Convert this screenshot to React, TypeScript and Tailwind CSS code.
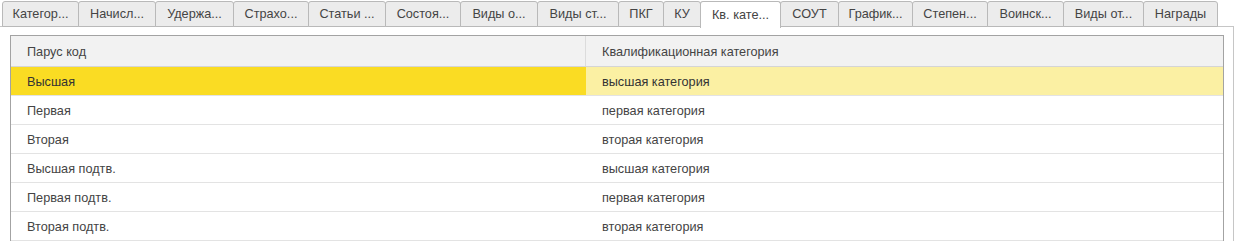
import React from 'react';

// width = distance between tab borders + 1 (neighbouring tabs share a border)
const tabs: { label: string; width: number; active?: boolean }[] = [
  { label: 'Категор...', width: 77 },
  { label: 'Начисл...', width: 78 },
  { label: 'Удержа...', width: 79 },
  { label: 'Страхо...', width: 76 },
  { label: 'Статьи ...', width: 78 },
  { label: 'Состоя...', width: 76 },
  { label: 'Виды о...', width: 78 },
  { label: 'Виды ст...', width: 82 },
  { label: 'ПКГ', width: 46 },
  { label: 'КУ', width: 38 },
  { label: 'Кв. кате...', width: 81, active: true },
  { label: 'СОУТ', width: 59 },
  { label: 'График...', width: 75 },
  { label: 'Степен...', width: 76 },
  { label: 'Воинск...', width: 77 },
  { label: 'Виды от...', width: 81 },
  { label: 'Награды', width: 75 },
];

const rows = [
  { code: 'Высшая', category: 'высшая категория' },
  { code: 'Первая', category: 'первая категория' },
  { code: 'Вторая', category: 'вторая категория' },
  { code: 'Высшая подтв.', category: 'высшая категория' },
  { code: 'Первая подтв.', category: 'первая категория' },
  { code: 'Вторая подтв.', category: 'вторая категория' },
];

export default function App() {
  return (
    <div
      className="w-[1236px] h-[242px] bg-white overflow-hidden text-[12.7px] text-[#444]"
      style={{ fontFamily: '"Liberation Sans", Arial, sans-serif' }}
    >
      {/* tab strip */}
      <div className="flex h-[27px] pl-[2px] pt-[1px]">
        {tabs.map((tab) => (
          <div
            key={tab.label}
            style={{ width: tab.width }}
            className={`-mr-px flex items-center justify-center pt-[2px] rounded-t-[3px] border border-[#b9b9b9] ${
              tab.active ? 'relative z-10 h-[27px] border-b-0 bg-white' : 'h-[26px] bg-[#ececec]'
            }`}
          >
            {tab.label}
          </div>
        ))}
      </div>

      {/* panel */}
      <div className="w-[1234px] h-[215px] -mt-px border-t border-r border-[#c6c6c6] pt-[8px] pl-[10px] pr-[9px]">
        <div className="border border-[#a3a3a3] border-b-0">
          <div className="flex h-[31px] bg-[#f2f2f2] border-b border-[#d5d5d5]">
            <div className="w-[575px] flex items-center pl-4 pt-[3px] border-r border-[#dcdcdc]">Парус код</div>
            <div className="flex-1 flex items-center pl-4 pt-[3px]">Квалификационная категория</div>
          </div>
          {rows.map((row, i) => (
            <div key={i} className="flex h-[29px] border-b border-[#e3e3e3]">
              <div className={`w-[575px] flex items-center pl-4 pt-[4px] ${i === 0 ? 'bg-[#fadc23] text-[#333]' : ''}`}>
                {row.code}
              </div>
              <div className={`flex-1 flex items-center pl-4 pt-[4px] ${i === 0 ? 'bg-[#fbf0a3] text-[#333]' : ''}`}>
                {row.category}
              </div>
            </div>
          ))}
        </div>
      </div>
    </div>
  );
}
